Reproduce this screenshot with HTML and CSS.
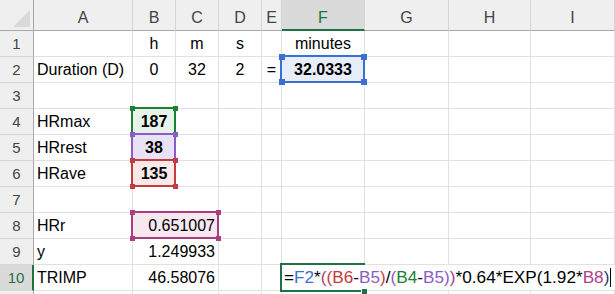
FILE: index.html
```html
<!DOCTYPE html>
<html lang="en">
<head>
    <meta charset="UTF-8">
    <title>TRIMP</title>
    <link rel="stylesheet" href="styles.css">
</head>
<body>
    <div class="sheet">
        <!-- column headers -->
        <div class="corner"><span class="tri"></span></div>
        <div class="colhead">A</div>
        <div class="colhead">B</div>
        <div class="colhead">C</div>
        <div class="colhead">D</div>
        <div class="colhead">E</div>
        <div class="colhead on">F</div>
        <div class="colhead">G</div>
        <div class="colhead">H</div>
        <div class="colhead">I</div>

        <!-- 1 -->
        <div class="rowhead">1</div>
        <div class="cell"></div>
        <div class="cell c">h</div>
        <div class="cell c">m</div>
        <div class="cell c">s</div>
        <div class="cell"></div>
        <div class="cell c">minutes</div>
        <div class="cell"></div>
        <div class="cell"></div>
        <div class="cell"></div>

        <!-- 2 -->
        <div class="rowhead">2</div>
        <div class="cell">Duration (D)</div>
        <div class="cell c">0</div>
        <div class="cell c">32</div>
        <div class="cell c">2</div>
        <div class="cell c">=</div>
        <div class="cell c b ref fill-blue">32.0333
            <span class="box blue big"><i class="tl"></i><i class="tr"></i><i class="bl"></i><i class="br"></i></span>
        </div>
        <div class="cell"></div>
        <div class="cell"></div>
        <div class="cell"></div>

        <!-- 3 -->
        <div class="rowhead">3</div>
        <div class="cell"></div>
        <div class="cell"></div>
        <div class="cell"></div>
        <div class="cell"></div>
        <div class="cell"></div>
        <div class="cell"></div>
        <div class="cell"></div>
        <div class="cell"></div>
        <div class="cell"></div>

        <!-- 4 -->
        <div class="rowhead">4</div>
        <div class="cell">HRmax</div>
        <div class="cell c b ref fill-green">187
            <span class="box green"><i class="tl"></i><i class="tr"></i><i class="bl"></i><i class="br"></i></span>
        </div>
        <div class="cell"></div>
        <div class="cell"></div>
        <div class="cell"></div>
        <div class="cell"></div>
        <div class="cell"></div>
        <div class="cell"></div>
        <div class="cell"></div>

        <!-- 5 -->
        <div class="rowhead">5</div>
        <div class="cell">HRrest</div>
        <div class="cell c b ref fill-purple">38
            <span class="box purple"><i class="tl"></i><i class="tr"></i><i class="bl"></i><i class="br"></i></span>
        </div>
        <div class="cell"></div>
        <div class="cell"></div>
        <div class="cell"></div>
        <div class="cell"></div>
        <div class="cell"></div>
        <div class="cell"></div>
        <div class="cell"></div>

        <!-- 6 -->
        <div class="rowhead">6</div>
        <div class="cell">HRave</div>
        <div class="cell c b ref fill-red">135
            <span class="box red"><i class="tl"></i><i class="tr"></i><i class="bl"></i><i class="br"></i></span>
        </div>
        <div class="cell"></div>
        <div class="cell"></div>
        <div class="cell"></div>
        <div class="cell"></div>
        <div class="cell"></div>
        <div class="cell"></div>
        <div class="cell"></div>

        <!-- 7 -->
        <div class="rowhead">7</div>
        <div class="cell"></div>
        <div class="cell span2"></div>
        <div class="cell"></div>
        <div class="cell"></div>
        <div class="cell"></div>
        <div class="cell"></div>
        <div class="cell"></div>
        <div class="cell"></div>

        <!-- 8 -->
        <div class="rowhead">8</div>
        <div class="cell">HRr</div>
        <div class="cell span2 r ref fill-pink">0.651007
            <span class="box pink"><i class="tl"></i><i class="tr"></i><i class="bl"></i><i class="br"></i></span>
        </div>
        <div class="cell"></div>
        <div class="cell"></div>
        <div class="cell"></div>
        <div class="cell"></div>
        <div class="cell"></div>
        <div class="cell"></div>

        <!-- 9 -->
        <div class="rowhead">9</div>
        <div class="cell">y</div>
        <div class="cell span2 r">1.249933</div>
        <div class="cell"></div>
        <div class="cell"></div>
        <div class="cell"></div>
        <div class="cell"></div>
        <div class="cell"></div>
        <div class="cell"></div>

        <!-- 10 -->
        <div class="rowhead on">10</div>
        <div class="cell">TRIMP</div>
        <div class="cell span2 r">46.58076</div>
        <div class="cell"></div>
        <div class="cell"></div>
        <div class="cell ref">
            <span class="box active"><i class="br"></i></span>
            <span class="editor">=<em class="k-blue">F2</em>*<em class="k-paren">(</em><em class="k-red">(B6</em>-<em class="k-purple">B5</em><em class="k-red">)</em>/<em class="k-purple">(</em><em class="k-green">B4</em>-<em class="k-purple">B5)</em><em class="k-paren">)</em>*0.64*EXP(1.92*<em class="k-pink">B8</em><em class="k-navy">)</em><span class="caret"></span></span>
        </div>
        <div class="cell"></div>
        <div class="cell"></div>
        <div class="cell"></div>

        <!-- 11 (mostly below the fold) -->
        <div class="rowhead"></div>
        <div class="cell"></div>
        <div class="cell span2"></div>
        <div class="cell"></div>
        <div class="cell"></div>
        <div class="cell"></div>
        <div class="cell"></div>
        <div class="cell"></div>
        <div class="cell"></div>
    </div>
</body>
</html>
```

FILE: styles.css
```css
body {
    margin: 0;
    height: 294px;
    overflow: hidden;
    background: #fff;
    font-family: 'Liberation Sans', Arial, sans-serif;
}

.sheet {
    display: grid;
    grid-template-columns: 34px 99px 43px 43px 43px 20px 83px 84px 82px 1fr;
    grid-template-rows: 31px repeat(11, 26px);
    font-size: 16px;
    color: #000;
}

.sheet > div {
    box-sizing: border-box;
    border-right: 1px solid #e1e1e1;
    border-bottom: 1px solid #e1e1e1;
    white-space: nowrap;
    line-height: 25px;
    padding: 0 3px;
}

/* headers */
.corner {
    background: #efefef;
    border-right-color: #a9a9a9 !important;
    border-bottom-color: #a9a9a9 !important;
    display: flex;
    justify-content: flex-end;
    align-items: flex-end;
    padding: 3px !important;
}

.tri {
    width: 0;
    height: 0;
    border-left: 17px solid transparent;
    border-bottom: 17px solid #d9d9d9;
}

.colhead {
    background: #efefef;
    border-right-color: #d5d5d5 !important;
    border-bottom-color: #a9a9a9 !important;
    text-align: center;
    color: #444;
    padding-top: 6px !important;
    line-height: 24px !important;
}

.rowhead {
    background: #efefef;
    border-right-color: #a9a9a9 !important;
    border-bottom-color: #d5d5d5 !important;
    text-align: center;
    color: #444;
    font-size: 15px;
}

.colhead.on {
    background: #dadada;
    color: #1e7145;
    border-bottom: 2px solid #1e7145 !important;
}

.rowhead.on {
    background: #dadada;
    color: #1e7145;
    border-right: 2px solid #1e7145 !important;
}

/* cells */
.c { text-align: center; }
.r { text-align: right; }
.b { font-weight: bold; }
.span2 { grid-column: span 2; }

.fill-blue { background: #e8eef9; }
.fill-green { background: #e6f2ea; }
.fill-purple { background: #e9e2f4; }
.fill-red { background: #f8e8e8; }
.fill-pink { background: #f6e7f0; }

/* reference boxes */
.ref { position: relative; }

.box {
    position: absolute;
    top: -2px;
    left: -2px;
    right: -1px;
    bottom: -1px;
    border: 2px solid currentColor;
}

.box i {
    position: absolute;
    width: 5px;
    height: 5px;
    background: currentColor;
}

.box .tl { left: -3px; top: -3px; }
.box .tr { right: -4px; top: -3px; }
.box .bl { left: -3px; bottom: -4px; }
.box .br { right: -4px; bottom: -4px; }

.box.big i { width: 6px; height: 6px; }

.blue { color: #3a70cf; }
.green { color: #1b7f34; }
.purple { color: #8a5cc6; }
.red { color: #c23b3e; }
.pink { color: #a8407f; }

.box.active {
    color: #1e7145;
    bottom: -2px;
}

.box.active .br {
    z-index: 3;
    outline: 1px solid #fff;
}

/* in-cell editor */
.editor {
    position: absolute;
    left: 0;
    top: 0;
    bottom: 0;
    width: 333px;
    background: #fff;
    z-index: 2;
    padding-left: 2px;
    font-size: 17.2px;
    line-height: 25px;
}

.editor em { font-style: normal; }

.k-blue { color: #3a70cf; }
.k-red { color: #c23b3e; }
.k-purple { color: #8a5cc6; }
.k-green { color: #1b7f34; }
.k-pink { color: #b0418a; }
.k-paren { color: #a8407f; }
.k-navy { color: #1f3a6e; }

.caret {
    display: inline-block;
    width: 1px;
    height: 19px;
    margin-left: 1px;
    background: #000;
    vertical-align: -4px;
}
```
